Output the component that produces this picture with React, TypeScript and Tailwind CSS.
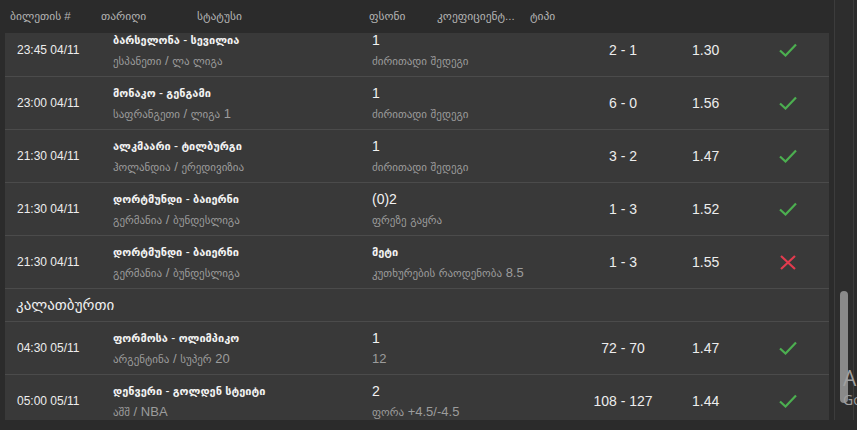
import React from "react"

type Bet = {
  time: string
  match: string
  league: string
  pick: string
  market: string
  score: string
  coef: string
  won: boolean
}

const football: Bet[] = [
  { time: "23:45 04/11", match: "ბარსელონა - სევილია", league: "ესპანეთი / ლა ლიგა", pick: "1", market: "ძირითადი შედეგი", score: "2 - 1", coef: "1.30", won: true },
  { time: "23:00 04/11", match: "მონაკო - გენგამი", league: "საფრანგეთი / ლიგა 1", pick: "1", market: "ძირითადი შედეგი", score: "6 - 0", coef: "1.56", won: true },
  { time: "21:30 04/11", match: "ალკმაარი - ტილბურგი", league: "ჰოლანდია / ერედივიზია", pick: "1", market: "ძირითადი შედეგი", score: "3 - 2", coef: "1.47", won: true },
  { time: "21:30 04/11", match: "დორტმუნდი - ბაიერნი", league: "გერმანია / ბუნდესლიგა", pick: "(0)2", market: "ფრეზე გაყრა", score: "1 - 3", coef: "1.52", won: true },
  { time: "21:30 04/11", match: "დორტმუნდი - ბაიერნი", league: "გერმანია / ბუნდესლიგა", pick: "მეტი", market: "კუთხურების რაოდენობა 8.5", score: "1 - 3", coef: "1.55", won: false },
]

const basketball: Bet[] = [
  { time: "04:30 05/11", match: "ფორმოსა - ოლიმპიკო", league: "არგენტინა / სუპერ 20", pick: "1", market: "12", score: "72 - 70", coef: "1.47", won: true },
  { time: "05:00 05/11", match: "დენვერი - გოლდენ სტეიტი", league: "აშშ / NBA", pick: "2", market: "ფორა +4.5/-4.5", score: "108 - 127", coef: "1.44", won: true },
]

// georgian glyphs come out of DejaVu and run large, so latin bits get their own size
function Mixed({ text, geo, latin }: { text: string; geo: string; latin: string }) {
  const parts = text.split(/([^\u10A0-\u10FF]+)/).filter(Boolean)
  return (
    <>
      {parts.map((p, i) =>
        /[\u10A0-\u10FF]/.test(p) ? (
          <span key={i} className={geo}>{p}</span>
        ) : (
          <span key={i} className={latin}>{p}</span>
        )
      )}
    </>
  )
}

function Check() {
  return (
    <svg width="18" height="14" viewBox="0 0 18 14" fill="none" stroke="#4caf50" strokeWidth={2.2}>
      <path d="M1 7.5L6.5 12.5L17 1.5" />
    </svg>
  )
}

function Cross() {
  return (
    <svg width="16" height="15" viewBox="0 0 16 15" fill="none" stroke="#e23b4e" strokeWidth={2.2}>
      <path d="M1 1L15 14M15 1L1 14" />
    </svg>
  )
}

function Row({ bet }: { bet: Bet }) {
  return (
    <div className="flex items-center h-[53px] border-b border-[#4b4b4b] pl-[12px]">
      <div className="w-[96px] text-[12px] text-[#ededed]">{bet.time}</div>
      <div className="w-[259px] flex flex-col">
        <span className="leading-[20px] text-[#f2f2f2]">
          <Mixed text={bet.match} geo="text-[11px] font-bold" latin="text-[12px]" />
        </span>
        <span className="leading-[20px] text-[#9c9c9c]">
          <Mixed text={bet.league} geo="text-[11px]" latin="text-[13px]" />
        </span>
      </div>
      <div className="w-[188px] flex flex-col">
        <span className="leading-[20px] text-[#f2f2f2]">
          <Mixed text={bet.pick} geo="text-[11px] font-bold" latin="text-[14px]" />
        </span>
        <span className="leading-[20px] text-[#9c9c9c]">
          <Mixed text={bet.market} geo="text-[11px]" latin="text-[13px]" />
        </span>
      </div>
      <div className="w-[126px] text-center text-[14px] text-[#ededed]">{bet.score}</div>
      <div className="w-[66px] pl-[6px] text-[14px] text-[#ededed]">{bet.coef}</div>
      <div className="w-[72px] flex justify-center">{bet.won ? <Check /> : <Cross />}</div>
    </div>
  )
}

export default function App() {
  return (
    <div className="relative w-[857px] h-[430px] overflow-hidden bg-[#2b2b2b] font-['Liberation_Sans','DejaVu_Sans',sans-serif]">
      <div className="flex h-[420px]">
        <div className="w-[829px] pl-[5px] flex flex-col">
          <div className="h-[33px] flex items-center pl-[5px] text-[11.5px] text-[#b4b4b4]">
            <span className="w-[91px]">ბილეთის #</span>
            <span className="w-[96px]">თარიღი</span>
            <span className="w-[172px]">სტატუსი</span>
            <span className="w-[68px]">ფსონი</span>
            <span className="w-[93px] whitespace-nowrap">კოეფიციენტ...</span>
            <span>ტიპი</span>
          </div>
          <div className="flex-1 overflow-hidden bg-[#393939]">
            <div className="-mt-[9px]">
              {football.map((b, i) => (
                <Row key={i} bet={b} />
              ))}
              <div className="h-[33px] flex items-center pl-[11px] border-b border-[#4b4b4b] text-[15px] text-[#f0f0f0] uppercase">
                კალათბურთი
              </div>
              {basketball.map((b, i) => (
                <Row key={i} bet={b} />
              ))}
            </div>
          </div>
        </div>
        <div className="ml-[5px] w-[20px] border-x border-[#3c3c3c] bg-[#2d2d2d] pl-[5px]">
          <div className="mt-[291px] w-[8px] h-[112px] rounded-full bg-[#8a8a8a]" />
        </div>
      </div>
      <div className="absolute left-[843px] top-[368px] text-[#a0a0a0] leading-none font-['Open_Sans',sans-serif]">
        <div className="text-[21px]">A</div>
        <div className="text-[14px] mt-[4px]">Go</div>
      </div>
    </div>
  )
}
